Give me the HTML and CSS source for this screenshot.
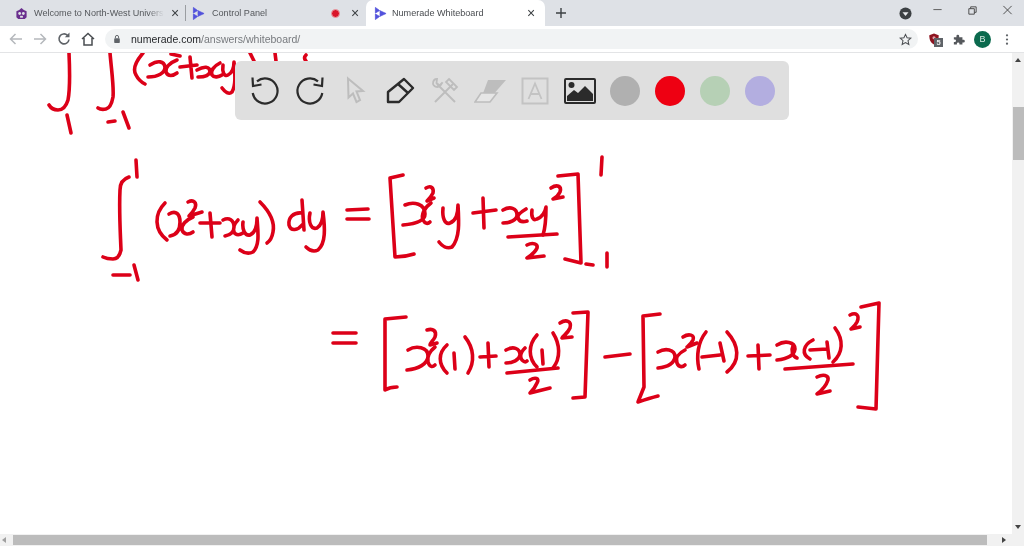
FILE: index.html
```html
<!DOCTYPE html>
<html lang="en">
<head>
<meta charset="utf-8">
<title>Numerade Whiteboard</title>
<link rel="stylesheet" href="styles.css">
</head>
<body>
<div class="window">
  <header class="tabbar">
    <div class="tab tab-first">
      <svg class="favicon" viewBox="0 0 14 14"><path d="M7 1 9.500 3.200 12.500 4.500V11L10.500 13H3.500L1.500 11V4.500L4.500 3.200Z" fill="#6a2f8e"/><circle cx="5" cy="7" r="1.500" fill="#dee1e6"/><circle cx="9" cy="7" r="1.500" fill="#dee1e6"/><rect x="5.500" y="9.500" width="3" height="2" fill="#dee1e6"/></svg>
      <span class="tab-title fade">Welcome to North-West Univers</span>
      <span class="tab-x">×</span>
    </div>
    <div class="tab-sep"></div>
    <div class="tab tab-second">
      <svg class="favicon" viewBox="0 0 14 14"><path d="M1.500 .5 6 3.800 1.500 6.500ZM1.500 7.500 6 10.200 1.500 13.500ZM6.500 4 13 7 6.500 10Z" fill="#5252dc" stroke="#5252dc" stroke-width=".8" stroke-linejoin="round"/></svg>
      <span class="tab-title">Control Panel</span>
      <span class="rec"></span>
      <span class="tab-x">×</span>
    </div>
    <div class="tab tab-active">
      <svg class="favicon" viewBox="0 0 14 14"><path d="M1.500 .5 6 3.800 1.500 6.500ZM1.500 7.500 6 10.200 1.500 13.500ZM6.500 4 13 7 6.500 10Z" fill="#5252dc" stroke="#5252dc" stroke-width=".8" stroke-linejoin="round"/></svg>
      <span class="tab-title">Numerade Whiteboard</span>
      <span class="tab-x">×</span>
    </div>
    <svg class="newtab" viewBox="0 0 12 12"><path d="M6 1V11M1 6H11" stroke="#3c4043" stroke-width="1.400"/></svg>
    <div class="window-controls">
      <svg class="profile-dot" viewBox="0 0 14 14"><circle cx="7" cy="7" r="6.500" fill="#3c4043"/><path d="M3.800 5.600H10.200L7 9.600Z" fill="#e8eaed"/></svg>
      <svg class="win-btn" viewBox="0 0 12 12"><path d="M1.500 5H10.500" stroke="#555" stroke-width="1"/></svg>
      <svg class="win-btn" viewBox="0 0 12 12"><path d="M2 4H8V10H2Z M4 4V2H10V8H8" fill="none" stroke="#444" stroke-width="1"/></svg>
      <svg class="win-btn" viewBox="0 0 12 12"><path d="M1.500 1 10.500 10M10.500 1 1.500 10" stroke="#444" stroke-width="1"/></svg>
    </div>
  </header>

  <nav class="navbar">
    <svg class="nav-icon" viewBox="0 0 16 16"><path d="M14 8H3M7.500 3 2.500 8 7.500 13" fill="none" stroke="#b5b8bc" stroke-width="1.500"/></svg>
    <svg class="nav-icon" viewBox="0 0 16 16"><path d="M2 8H13M8.500 3 13.500 8 8.500 13" fill="none" stroke="#b5b8bc" stroke-width="1.500"/></svg>
    <svg class="nav-icon" viewBox="0 0 16 16"><path d="M13 8.500A5 5 0 1 1 11.500 4.300" fill="none" stroke="#5f6368" stroke-width="1.600"/><path d="M13.500 1.500V6.200H8.800Z" fill="#5f6368"/></svg>
    <svg class="nav-icon" viewBox="0 0 16 16"><path d="M2 8 8 2.500 14 8M4 7V14H12V7" fill="none" stroke="#4a4d51" stroke-width="1.500"/></svg>
    <div class="omnibox">
      <svg class="lock" viewBox="0 0 10 12"><path d="M3 5V3.500A2 2 0 0 1 7 3.500V5" fill="none" stroke="#5f6368" stroke-width="1.200"/><rect x="1.500" y="5" width="7" height="6" rx="1" fill="#5f6368"/></svg>
      <span class="url"><b>numerade.com</b>/answers/whiteboard/</span>
      <svg class="star" viewBox="0 0 14 14"><path d="M7 1.500 8.700 5.200 12.700 5.600 9.700 8.300 10.600 12.300 7 10.200 3.400 12.300 4.300 8.300 1.300 5.600 5.300 5.200Z" fill="none" stroke="#4a4d51" stroke-width="1.100"/></svg>
    </div>
    <div class="extensions">
      <span class="shield-wrap">
        <svg class="shield" viewBox="0 0 14 14"><path d="M7 .5 12.500 2.500C12.500 8 11 11 7 13.500 3 11 1.500 8 1.500 2.500Z" fill="#8e1420"/><circle cx="7" cy="5.500" r="1.800" fill="#e4a0a6"/></svg>
        <span class="badge">5</span>
      </span>
      <svg class="puzzle" viewBox="0 0 14 14"><path d="M1 5H4V3.500A1.600 1.600 0 0 1 7.200 3.500V5H11V8H12.200A1.600 1.600 0 0 1 12.200 11.200H11V13.500H7.500V12.500A1.500 1.500 0 0 0 4.500 12.500V13.500H1V10.500H2A1.500 1.500 0 0 0 2 7.500H1Z" fill="#55585c"/></svg>
      <span class="avatar">B</span>
      <svg class="kebab" viewBox="0 0 4 14"><circle cx="2" cy="2.500" r="1.200" fill="#5f6368"/><circle cx="2" cy="7" r="1.200" fill="#5f6368"/><circle cx="2" cy="11.500" r="1.200" fill="#5f6368"/></svg>
    </div>
  </nav>

  <main class="viewport">
    <div class="board-row">
      <div class="board">
        <svg class="ink" viewBox="0 0 1012 481" aria-label="Handwritten integral working">
          <g transform="translate(0 -53)">
            <path d="M69 53C70 75 70 90 68 100Q65 110 58 110Q52 110 49 105"/>
            <path d="M67 115 71 133"/>
            <path d="M110 53C112 75 114 88 113 97Q111 108 106 109Q101 110 98 108"/>
            <path d="M108 122 115 121M123 112 129 128"/>
            <path d="M143 53Q131 67 136 75Q139 81 145 84"/>
            <path d="M150 65C158 60 164 61 165 67C165 73 158 77 148 77M177 60C169 63 165 68 166 72C168 77 173 76 177 73"/>
            <path d="M171 54 180 56"/>
            <path d="M180 67 197 65M190 57 192 78"/>
            <path d="M197 70C204 66 210 66 210 72C209 76 204 77 198 77M220 63C214 66 210 71 212 75C214 78 219 77 222 75"/>
            <path d="M223 65C222 72 224 77 228 75C232 73 234 68 234 62C235 75 236 85 232 92C229 95 225 92 222 88"/>
            <path d="M250 53 254 61M275 53 276 61M306 55Q303 58 306 61"/>
            <path d="M129 177Q120 180 120 190C119 210 120 225 121 250Q119 259 113 259Q107 259 103 257"/>
            <path d="M136 160 137 177"/>
            <path d="M113 275 130 275M134 265 138 280"/>
            <path d="M165 203C154 214 154 230 167 240"/>
            <path d="M169 214C176 210 180 214 180 222C180 231 176 235 170 236M193 217C186 220 181 225 182 230C184 235 189 235 193 232"/>
            <path d="M188 202C194 199 197 203 195 208C193 212 190 215 189 216L202 212"/>
            <path d="M200 223 220 223M210 213 212 237"/>
            <path d="M223 220C229 217 234 220 234 227C234 232 230 235 225 236M238 220C234 224 233 229 234 232C236 236 240 235 243 233"/>
            <path d="M243 222C242 230 245 236 250 235C255 233 257 226 257 218C258 232 260 245 253 252C249 254 244 253 240 250"/>
            <path d="M260 202C270 212 275 222 273 232C272 238 270 241 267 243"/>
            <path d="M302 213C293 212 288 218 289 225C291 232 298 230 302 225M302 200 304 230"/>
            <path d="M310 213C308 222 311 230 317 228C322 225 323 219 323 212C325 228 326 243 318 250C314 252 310 251 306 247"/>
            <path d="M347 210 368 209M347 219 369 219"/>
            <path d="M403 175 390 178 395 257Q405 257 414 254"/>
            <path d="M405 205C414 201 425 204 425 214C425 221 414 224 403 225M431 203C424 208 421 215 423 220C425 224 428 224 430 222"/>
            <path d="M426 188C431 185 434 188 433 193C431 197 428 200 427 201L434 198"/>
            <path d="M443 208C442 218 445 225 450 223C456 221 458 213 458 205C459 222 460 238 452 247C447 249 442 246 439 242"/>
            <path d="M473 213 496 210M483 198 484 228"/>
            <path d="M503 210C510 206 517 208 517 215C517 220 510 223 503 223M526 209C521 212 517 215 518 218C520 223 524 222 527 221"/>
            <path d="M532 210C531 217 533 221 537 219C542 217 545 213 546 207C546 217 546 226 543 235"/>
            <path d="M551 188C557 184 562 186 560 192C558 196 555 198 553 199L563 197"/>
            <path d="M508 237 557 234"/>
            <path d="M527 245C533 242 538 244 537 248C535 253 530 256 527 258L544 256"/>
            <path d="M558 176 578 174 581 263 565 259"/>
            <path d="M586 264 593 265M607 253 607 267M602 157 601 175"/>
            <path d="M333 333 356 333M333 343 356 343"/>
            <path d="M406 317 385 319 385 390Q390 387 397 387"/>
            <path d="M408 350C416 345 428 347 428 356C428 364 418 369 407 370M435 347C430 351 427 357 428 362C430 368 433 367 435 365"/>
            <path d="M427 330C433 328 437 331 435 337C433 341 430 343 430 345L437 343"/>
            <path d="M447 345C438 353 438 364 447 373M454 353 455 369M465 337C474 348 475 362 468 373"/>
            <path d="M480 357 496 356M488 343 489 367"/>
            <path d="M506 350C513 346 520 348 520 355C519 360 513 363 506 363M525 348C521 352 519 356 522 360C524 362 526 362 527 361"/>
            <path d="M537 335C528 345 528 358 537 367M542 350 543 364M553 333C560 344 561 358 553 368"/>
            <path d="M560 323C566 319 572 321 570 328C568 333 563 336 562 338L572 337"/>
            <path d="M507 373 558 368"/>
            <path d="M530 380C535 377 540 378 537 383C535 388 532 391 530 393L550 388"/>
            <path d="M573 313 588 312 585 397 573 398"/>
            <path d="M605 357 630 354"/>
            <path d="M660 314 643 316 644 387 638 402Q650 398 658 396"/>
            <path d="M658 352C665 348 675 349 675 357C674 364 667 367 658 368M685 350C679 353 675 358 677 363C679 368 683 367 685 365"/>
            <path d="M683 337C689 333 695 335 693 340C691 344 688 346 687 347L697 343"/>
            <path d="M706 332C698 342 696 356 699 369M702 357 720 355M720 343 724 361M727 332C739 345 741 361 727 372"/>
            <path d="M748 356 770 355M758 345 759 369"/>
            <path d="M777 345C785 340 795 342 795 349C794 356 786 359 777 360M793 346C791 350 792 356 797 358"/>
            <path d="M813 340C803 345 801 354 810 359M810 350 827 349M827 342 829 358M835 328C844 340 843 353 833 362"/>
            <path d="M850 315C856 312 860 315 857 322C855 326 852 328 851 329L860 327"/>
            <path d="M785 369 853 364"/>
            <path d="M817 377C823 374 829 375 828 380C826 386 821 391 817 394L830 391"/>
            <path d="M861 307 879 303 876 409 858 407"/>
          </g>
        </svg>
        <div class="tools">
          <span class="tool"><svg viewBox="0 0 30 30"><path d="M7 5.400A12.500 12.500 0 1 1 2.700 17" fill="none" stroke="#2b2b2b" stroke-width="2.200"/><path d="M2.500 1.500 3 10 11.500 8.500" fill="none" stroke="#2b2b2b" stroke-width="2.200"/></svg></span>
          <span class="tool"><svg viewBox="0 0 30 30"><path d="M23 5.400A12.500 12.500 0 1 0 27.300 17" fill="none" stroke="#2b2b2b" stroke-width="2.200"/><path d="M27.500 1.500 27 10 18.500 8.500" fill="none" stroke="#2b2b2b" stroke-width="2.200"/></svg></span>
          <span class="tool"><svg viewBox="0 0 30 30"><path d="M8 2.500 23 15 16.500 15.500 20 24 16.500 26 13 17.500 8.500 21.500Z" fill="none" stroke="#bdbdbd" stroke-width="2"/></svg></span>
          <span class="tool"><svg viewBox="0 0 30 30"><path d="M3 16 19 3 28 12 14 26H3ZM13 8 23 17" fill="none" stroke="#2b2b2b" stroke-width="2.400" stroke-linejoin="round"/></svg></span>
          <span class="tool"><svg viewBox="0 0 30 30"><path d="M5 26 23 8M25 26 7 8" stroke="#bdbdbd" stroke-width="2"/><path d="M3 8Q3 3 7 3L6.500 7 9.500 9.500 12.500 6.500Q11 10 8 11 4 11 3 8ZM19 3 27 11 24 14 16 6Z" fill="none" stroke="#bdbdbd" stroke-width="1.800"/></svg></span>
          <span class="tool"><svg class="eraser-icon" viewBox="0 0 32 24"><path d="M14 1H32L18 17H8Z" fill="#bdbdbd"/><path d="M7 14H23L16 23H1Z" fill="#e6e6e6" stroke="#bdbdbd" stroke-width="1.600"/></svg></span>
          <span class="tool"><svg viewBox="0 0 30 30"><rect x="2.500" y="2.500" width="25" height="25" fill="none" stroke="#c3c3c3" stroke-width="2"/><path d="M8.500 23 15 7.500 21.500 23M10.500 18H19.500" fill="none" stroke="#c3c3c3" stroke-width="1.800"/></svg></span>
          <span class="tool"><svg class="image-icon" viewBox="0 0 32 26"><rect x="1" y="1" width="30" height="24" rx="1" fill="none" stroke="#2b2b2b" stroke-width="2"/><circle cx="7.500" cy="7" r="3" fill="#2b2b2b"/><path d="M3 23V18L10 12 14 15 21 8 29 16V23Z" fill="#2b2b2b"/></svg></span>
          <span class="tool"><span class="swatch swatch-grey"></span></span>
          <span class="tool"><span class="swatch swatch-red"></span></span>
          <span class="tool"><span class="swatch swatch-green"></span></span>
          <span class="tool"><span class="swatch swatch-purple"></span></span>
        </div>
      </div>
      <div class="vscroll">
        <span class="arrow arrow-up"></span>
        <span class="vthumb"></span>
        <span class="arrow arrow-down"></span>
      </div>
    </div>
    <div class="hscroll">
      <span class="arrow arrow-left"></span>
      <span class="hthumb"></span>
      <span class="arrow arrow-right"></span>
    </div>
  </main>
</div>
</body>
</html>
```
FILE: styles.css
```css
* { box-sizing: border-box; }
html, body { margin: 0; height: 100%; overflow: hidden; background: #fff; }
body { font-family: "Liberation Sans", "Open Sans", sans-serif; color: #3c4043; }
.window { display: flex; flex-direction: column; height: 546px; width: 1024px; filter: blur(0.35px); }

.tabbar { flex: none; height: 26px; background: #dee1e6; display: flex; align-items: center; }
.tab { display: flex; align-items: center; height: 100%; font-size: 9.100px; white-space: nowrap; }
.favicon { width: 13px; height: 13px; flex: none; }
.tab-title { margin-left: 6px; color: #55585c; }
.tab-x { font-size: 14px; color: #3c4043; line-height: 1; width: 12px; text-align: center; flex: none; }
.tab-first { width: 185px; padding-left: 15px; }
.tab-first .tab-title { width: 130px; }
.fade { -webkit-mask-image: linear-gradient(90deg, #000 88%, transparent); mask-image: linear-gradient(90deg, #000 88%, transparent); }
.tab-first .tab-x { margin-left: 5px; }
.tab-sep { width: 1px; height: 16px; background: #9a9da1; flex: none; }
.tab-second { width: 180px; padding-left: 6px; }
.tab-second .tab-title { width: 114px; margin-left: 7px; }
.rec { width: 9px; height: 9px; border-radius: 50%; background: #d9152a; border: 1px solid #e9a0a6; flex: none; margin-left: 5px; }
.tab-second .tab-x { margin-left: 9px; }
.tab-active { width: 179px; padding-left: 8px; background: #fff; border-radius: 7px 7px 0 0; }
.tab-active .tab-title { width: 133px; margin-left: 5px; color: #4a4d51; }
.newtab { width: 12px; height: 12px; margin-left: 10px; flex: none; }
.window-controls { margin-left: auto; display: flex; align-items: center; padding-right: 11px; }
.profile-dot { width: 13px; height: 13px; margin-right: 20px; margin-top: 1px; }
.win-btn { width: 11px; height: 11px; margin-left: 24px; margin-bottom: 5px; }
.profile-dot + .win-btn { margin-left: 0; }

.navbar { flex: none; height: 27px; background: #fff; border-bottom: 1px solid #e3e4e6; display: flex; align-items: center; padding-left: 8px; }
.nav-icon { width: 16px; height: 16px; flex: none; margin-right: 8px; }
.omnibox { flex: none; width: 813px; height: 20px; margin-left: 1px; background: #f1f3f4; border-radius: 10px; display: flex; align-items: center; padding-left: 8px; }
.lock { width: 8px; height: 10px; flex: none; }
.url { margin-left: 10px; font-size: 10.500px; color: #777a7e; }
.url b { font-weight: 400; color: #26282b; }
.star { width: 13px; height: 13px; margin-left: auto; margin-right: 6px; }
.extensions { display: flex; align-items: center; margin-left: 10px; }
.shield-wrap { position: relative; width: 14px; height: 14px; display: block; }
.shield { width: 12px; height: 14px; display: block; }
.badge { position: absolute; left: 6px; top: 6px; width: 9px; height: 9px; background: #5f6368; color: #eee; font-size: 7.500px; line-height: 9px; text-align: center; font-weight: 700; }
.puzzle { width: 12px; height: 12px; margin-left: 11px; flex: none; }
.avatar { width: 17px; height: 17px; border-radius: 50%; background: #0b6a4e; color: #d7e9e2; font-size: 9px; line-height: 17px; text-align: center; margin-left: 9px; flex: none; }
.kebab { width: 4px; height: 13px; margin-left: 14px; flex: none; }

.viewport { flex: 1; display: flex; flex-direction: column; min-height: 0; }
.board-row { flex: 1; display: flex; min-height: 0; }
.board { position: relative; flex: 1; overflow: hidden; background: #fff; }
.ink { display: block; width: 1012px; height: 481px; }
.ink path { fill: none; stroke: #dc0018; stroke-width: 3.600; stroke-linecap: round; stroke-linejoin: round; }

.tools { position: absolute; left: 235px; top: 8px; width: 554px; height: 59px; background: #dfdfdf; border-radius: 6px; display: flex; align-items: center; padding-left: 7px; }
.tool { width: 45px; height: 45px; flex: none; display: flex; align-items: center; justify-content: center; }
.tool svg { width: 30px; height: 30px; display: block; }
.tool .image-icon { width: 32px; height: 26px; }
.tool .eraser-icon { width: 32px; height: 24px; }
.swatch { width: 30px; height: 30px; border-radius: 50%; display: block; }
.swatch-grey { background: #b0b0b0; }
.swatch-red { background: #ee0012; }
.swatch-green { background: #b6d0b5; }
.swatch-purple { background: #b3aee0; }

.vscroll { flex: none; width: 12px; background: #f1f1f1; display: flex; flex-direction: column; align-items: center; padding-top: 5px; }
.vthumb { display: block; width: 11px; height: 53px; background: #bcbcbc; margin-top: 45px; margin-left: 1px; }
.hscroll { flex: none; height: 12px; background: #f1f1f1; display: flex; align-items: center; padding-left: 2px; }
.hthumb { display: block; width: 974px; height: 10px; background: #bcbcbc; margin-left: 7px; }
.arrow { display: block; width: 0; height: 0; border: 3px solid transparent; flex: none; }
.arrow-up { border-top: 0; border-bottom: 4px solid #444; }
.arrow-down { border-bottom: 0; border-top: 4px solid #444; margin-top: auto; margin-bottom: 5px; }
.arrow-left { border-left: 0; border-right: 4px solid #a0a0a0; }
.arrow-right { border-right: 0; border-left: 4px solid #444; margin-left: 15px; }
```
